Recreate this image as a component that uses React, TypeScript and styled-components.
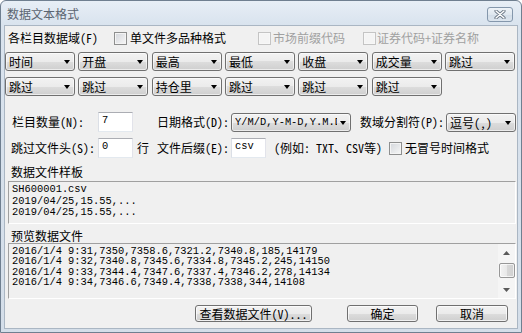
import React, { FC } from 'react';
import styled, { createGlobalStyle } from 'styled-components';

const UI_FONT = '"Noto Sans Mono CJK SC", "Noto Sans CJK SC", "Liberation Sans", sans-serif';
const MONO_FONT = '"Liberation Mono", "DejaVu Sans Mono", monospace';

const GlobalStyle = createGlobalStyle`
  html, body {
    margin: 0;
    padding: 0;
    background: #ffffff;
  }
  body {
    font-family: ${UI_FONT};
    font-size: 12px;
    color: #000;
  }
`;

/** Window frame */
const Window = styled.div`
  box-sizing: border-box;
  width: 522px;
  height: 333px;
  display: flex;
  flex-direction: column;
  padding: 0 3px 3px;
  border: 1px solid #6f7f90;
  border-radius: 6px 6px 0 0;
  background: linear-gradient(#e7eef6, #d9e3ee 24px, #d4dee9);
`;

const TitleBar = styled.div`
  flex: none;
  height: 24px;
  display: flex;
  align-items: center;
  justify-content: space-between;
  padding: 0 5px 0 3px;
`;

const Title = styled.span`
  padding-top: 2px;
  line-height: 16px;
  color: #5b6470;
`;

const CloseButton = styled.div`
  box-sizing: border-box;
  width: 26px;
  height: 15px;
  margin-top: 2px;
  display: flex;
  align-items: center;
  justify-content: center;
  border: 1px solid #8497ac;
  border-radius: 3px;
  background: linear-gradient(#eef3f8, #dfe7ef 50%, #d3dde8 51%, #dce5ee);
`;

/** Dialog body */
const Panel = styled.div`
  flex: 1;
  display: flex;
  flex-direction: column;
  background: #f0f0f0;
  border: 1px solid #aab6c3;
`;

const Row = styled.div<{ $top: number; $h: number; $pl?: number }>`
  flex: none;
  display: flex;
  align-items: center;
  height: ${(p) => p.$h}px;
  margin-top: ${(p) => p.$top}px;
  padding-left: ${(p) => p.$pl ?? 0}px;
`;

const Label = styled.span<{ $w?: number; $ml?: number; $disabled?: boolean }>`
  flex: none;
  width: ${(p) => (p.$w ? `${p.$w}px` : 'auto')};
  margin-left: ${(p) => p.$ml ?? 0}px;
  color: ${(p) => (p.$disabled ? '#a0a0a0' : '#000')};
  white-space: nowrap;
  line-height: 16px;
`;

const CheckBox = styled.span<{ $disabled?: boolean; $mr?: number }>`
  box-sizing: border-box;
  flex: none;
  width: 13px;
  height: 13px;
  margin-right: ${(p) => p.$mr ?? 3}px;
  border: 1px solid ${(p) => (p.$disabled ? '#c4c4c4' : '#8e8f8f')};
  background: ${(p) =>
    p.$disabled ? '#f4f4f4' : 'linear-gradient(135deg, #d3d6db, #f7f7f7)'};
  box-shadow: inset 0 0 0 1px ${(p) => (p.$disabled ? '#f7f7f7' : '#f4f4f4')};
`;

/** Column mapping dropdowns */
const ComboGrid = styled.div<{ $top: number }>`
  flex: none;
  display: grid;
  grid-template-columns: repeat(7, 1fr);
  column-gap: 3.33px;
  width: 510px;
  margin-top: ${(p) => p.$top}px;
`;

const Combo = styled.div<{ $w?: number }>`
  box-sizing: border-box;
  flex: none;
  width: ${(p) => (p.$w ? `${p.$w}px` : 'auto')};
  height: 19px;
  display: flex;
  align-items: center;
  padding: 0 2px 0 3px;
  border: 1px solid #707070;
  border-radius: 3px;
  background: linear-gradient(#f2f2f2, #ebebeb 50%, #dddddd 50%, #cfcfcf);
  box-shadow: inset 0 0 0 1px rgba(255, 255, 255, 0.6);
`;

const ComboText = styled.span<{ $mono?: boolean }>`
  flex: 1;
  overflow: hidden;
  white-space: nowrap;
  line-height: 17px;
  font-family: ${(p) => (p.$mono ? MONO_FONT : 'inherit')};
  font-size: ${(p) => (p.$mono ? '10.4px' : 'inherit')};
`;

const Arrow = styled.span`
  flex: none;
  width: 0;
  height: 0;
  margin: 1px 2px 0 3px;
  border-left: 3.5px solid transparent;
  border-right: 3.5px solid transparent;
  border-top: 4px solid #000;
`;

const TextBox = styled.div<{ $w: number }>`
  box-sizing: border-box;
  flex: none;
  width: ${(p) => p.$w}px;
  height: 20px;
  align-self: flex-start;
  padding: 1px 3px 0;
  background: #fff;
  border: 1px solid;
  border-color: #abadb3 #e2e3ea #e3e9ef #dbdfe6;
  font-family: ${MONO_FONT};
  font-size: 10.4px;
  line-height: 12px;
`;

/** Text previews */
const SectionLabel = styled.div<{ $top: number; $lh: number }>`
  flex: none;
  margin-top: ${(p) => p.$top}px;
  padding-left: 6px;
  line-height: ${(p) => p.$lh}px;
`;

const SunkenBox = styled.div<{ $h: number; $top?: number }>`
  box-sizing: border-box;
  flex: none;
  display: flex;
  height: ${(p) => p.$h}px;
  margin: ${(p) => p.$top ?? 0}px 1px 0 3px;
  border: 1px solid;
  border-color: #a0a0a0 #ffffff #ffffff #a0a0a0;
`;

const MonoText = styled.pre<{ $lh: number }>`
  flex: 1;
  margin: 0;
  padding: 2px 3px 0;
  overflow: hidden;
  font-family: ${MONO_FONT};
  font-size: 10.4px;
  line-height: ${(p) => p.$lh}px;
  color: #000;
`;

const ScrollBar = styled.div`
  flex: none;
  width: 17px;
  display: flex;
  flex-direction: column;
  align-items: center;
  background: #f5f5f5;
`;

const ScrollArrow = styled.div`
  flex: none;
  height: 17px;
  display: flex;
  align-items: center;
  justify-content: center;
`;

const ScrollThumb = styled.div`
  box-sizing: border-box;
  flex: none;
  width: 16px;
  height: 15px;
  margin-top: 2px;
  border: 1px solid #979797;
  border-radius: 2px;
  background: linear-gradient(90deg, #f3f3f3, #e8e8e8 50%, #d8d8d8 51%, #d0d0d0);
  box-shadow: inset 0 0 0 1px rgba(255, 255, 255, 0.7);
`;

const ScrollSpacer = styled.div`
  flex: 1;
`;

/** Footer buttons */
const ButtonRow = styled.div`
  flex: none;
  display: flex;
  justify-content: flex-end;
  margin-top: 6px;
  padding-right: 9px;
`;

const Button = styled.button<{ $w: number; $mr?: number }>`
  box-sizing: border-box;
  width: ${(p) => p.$w}px;
  height: 17px;
  margin-right: ${(p) => p.$mr ?? 0}px;
  padding: 0;
  font: inherit;
  line-height: 15px;
  color: #000;
  border: 1px solid #707070;
  border-radius: 3px;
  background: linear-gradient(#f2f2f2, #ebebeb 50%, #dddddd 50%, #cfcfcf);
  box-shadow: inset 0 0 0 1px rgba(255, 255, 255, 0.7);
`;

const firstRow = ['时间', '开盘', '最高', '最低', '收盘', '成交量', '跳过'];
const secondRow = ['跳过', '跳过', '持仓里', '跳过', '跳过', '跳过'];

const sampleText = 'SH600001.csv\n2019/04/25,15.55,...\n2019/04/25,15.55,...';
const previewText = [
  '2016/1/4 9:31,7350,7358.6,7321.2,7340.8,185,14179',
  '2016/1/4 9:32,7340.8,7345.6,7334.8,7345.2,245,14150',
  '2016/1/4 9:33,7344.4,7347.6,7337.4,7346.2,278,14134',
  '2016/1/4 9:34,7346.6,7349.4,7338,7338,344,14108',
].join('\n');

const Dropdown: FC<{ text: string; w?: number; mono?: boolean }> = ({ text, w, mono }) => (
  <Combo $w={w}>
    <ComboText $mono={mono}>{text}</ComboText>
    <Arrow />
  </Combo>
);

const ScrollTriangle: FC<{ down?: boolean }> = ({ down }) => (
  <svg width="7" height="4" viewBox="0 0 7 4">
    <path d={down ? 'M0 0 L7 0 L3.5 4 Z' : 'M0 4 L7 4 L3.5 0 Z'} fill="#5a5a5a" />
  </svg>
);

const App: FC = () => {
  return (
    <>
      <GlobalStyle />
      <Window>
        <TitleBar>
          <Title>数据文本格式</Title>
          <CloseButton>
            <svg width="12" height="9" viewBox="0 0 12 9">
              <path d="M2 1 L10 8 M10 1 L2 8" stroke="#6c7886" strokeWidth="3.2" strokeLinecap="round" />
              <path d="M2 1 L10 8 M10 1 L2 8" stroke="#ffffff" strokeWidth="1.4" strokeLinecap="round" />
            </svg>
          </CloseButton>
        </TitleBar>

        <Panel>
          <Row $top={4} $h={16} $pl={3}>
            <Label $w={106}>各栏目数据域(F)</Label>
            <CheckBox />
            <Label $w={128}>单文件多品种格式</Label>
            <CheckBox $disabled $mr={2} />
            <Label $w={90} $disabled>
              市场前缀代码
            </Label>
            <CheckBox $disabled $mr={1} />
            <Label $disabled>证券代码+证券名称</Label>
          </Row>

          <ComboGrid $top={6}>
            {firstRow.map((t, i) => (
              <Dropdown key={i} text={t} />
            ))}
          </ComboGrid>
          <ComboGrid $top={6}>
            {secondRow.map((t, i) => (
              <Dropdown key={i} text={t} />
            ))}
          </ComboGrid>

          <Row $top={16} $h={20}>
            <Label $ml={7} $w={86}>
              栏目数量(N):
            </Label>
            <TextBox $w={35}>7</TextBox>
            <Label $ml={24} $w={74}>
              日期格式(D):
            </Label>
            <Dropdown w={120} mono text="Y/M/D,Y-M-D,Y.M.D" />
            <Label $ml={9} $w={86}>
              数域分割符(P):
            </Label>
            <Dropdown w={70} text="逗号(,)" />
          </Row>

          <Row $top={6} $h={20}>
            <Label $ml={6} $w={87}>
              跳过文件头(S):
            </Label>
            <TextBox $w={35}>0</TextBox>
            <Label $ml={4} $w={20}>
              行
            </Label>
            <Label $w={74}>文件后缀(E):</Label>
            <TextBox $w={35}>csv</TextBox>
            <Label $ml={8} $w={115}>
              (例如: TXT、CSV等)
            </Label>
            <CheckBox />
            <Label>无冒号时间格式</Label>
          </Row>

          <SectionLabel $top={6} $lh={16}>
            数据文件样板
          </SectionLabel>
          <SunkenBox $h={43} $top={1}>
            <MonoText $lh={11.5}>{sampleText}</MonoText>
          </SunkenBox>

          <SectionLabel $top={4} $lh={15}>
            预览数据文件
          </SectionLabel>
          <SunkenBox $h={56}>
            <MonoText $lh={10.4}>{previewText}</MonoText>
            <ScrollBar>
              <ScrollArrow>
                <ScrollTriangle />
              </ScrollArrow>
              <ScrollThumb />
              <ScrollSpacer />
              <ScrollArrow>
                <ScrollTriangle down />
              </ScrollArrow>
            </ScrollBar>
          </SunkenBox>

          <ButtonRow>
            <Button $w={117} $mr={35}>
              查看数据文件(V)...
            </Button>
            <Button $w={71} $mr={18}>
              确定
            </Button>
            <Button $w={72}>取消</Button>
          </ButtonRow>
        </Panel>
      </Window>
    </>
  );
};

export default App;
